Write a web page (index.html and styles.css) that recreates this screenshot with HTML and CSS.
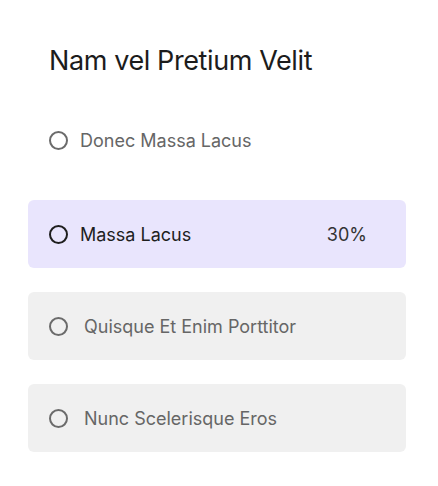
FILE: index.html
```html
<!DOCTYPE html>
<html>
<head>
<meta charset="utf-8">
<link rel="stylesheet" href="styles.css">
</head>
<body>
<div class="panel">
  <h1 class="title">Nam vel Pretium Velit</h1>
  <ul class="options">
    <li class="option plain">
      <span class="radio"></span>
      <span class="label">Donec Massa Lacus</span>
    </li>
    <li class="option box active">
      <span class="radio"></span>
      <span class="label">Massa Lacus</span>
      <span class="pct">30%</span>
    </li>
    <li class="option box muted">
      <span class="radio"></span>
      <span class="label">Quisque Et Enim Porttitor</span>
    </li>
    <li class="option box muted">
      <span class="radio"></span>
      <span class="label">Nunc Scelerisque Eros</span>
    </li>
  </ul>
</div>
</body>
</html>
```
FILE: styles.css
```css
* { box-sizing: border-box; }
html, body { margin: 0; padding: 0; background: #fff; }
body { font-family: "Inter", "Lato", sans-serif; }
.panel { width: 438px; padding: 44px 32px 0 28px; }
.title {
  margin: 0 0 0 21px;
  font-size: 27px;
  font-weight: 400;
  line-height: 34px;
  color: #1c1c1c;
  letter-spacing: -0.4px;
}
.options { list-style: none; margin: 0; padding: 0; display: flex; flex-direction: column; gap: 24px; }
.option {
  display: flex;
  align-items: center;
  height: 68px;
  padding: 0 39px 0 21px;
  border-radius: 6px;
  font-size: 18px;
}
.plain { margin-top: 28px; margin-bottom: 2px; }
.radio {
  width: 19px; height: 19px;
  border: 2px solid #6b6b6b;
  border-radius: 50%;
  flex: none;
}
.label { margin-left: 12px; color: #666; flex: 1; }
.active { background: #e9e5fd; }
.active .radio { border-color: #1e1e1e; }
.active .label { color: #1e1e1e; }
.pct { color: #333; }
.muted { background: #f0f0f0; }
.muted .label { margin-left: 16px; }
```
